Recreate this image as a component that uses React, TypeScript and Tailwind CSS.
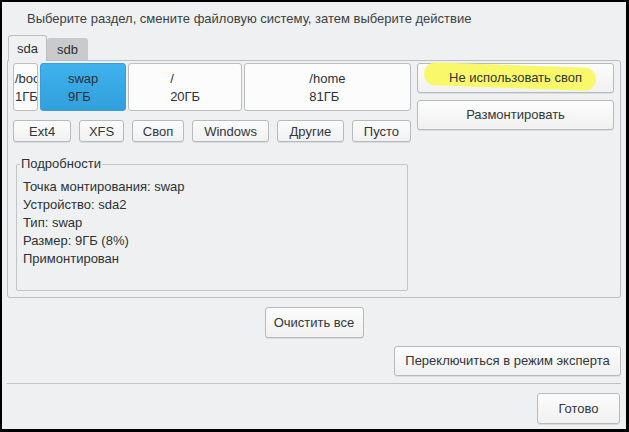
import React from 'react';

const font = { fontFamily: '"Liberation Sans", Arial, sans-serif' };

const btn =
  'flex items-center justify-center rounded-[3px] border border-[#b7b9ba] bg-gradient-to-b from-[#fcfcfc] to-[#f1f1f1] shadow-[0_1px_0_rgba(0,0,0,0.08)] text-[#31363b]';

type Part = { label: string; size: string; w: string; selected?: boolean };

const parts: Part[] = [
  { label: '/boot', size: '1ГБ', w: 'w-[25px]' },
  { label: 'swap', size: '9ГБ', w: 'w-[87px]', selected: true },
  { label: '/', size: '20ГБ', w: 'w-[114px]' },
  { label: '/home', size: '81ГБ', w: 'w-[168px]' },
];

const fsTypes = [
  { name: 'Ext4', w: 'w-[60px]' },
  { name: 'XFS', w: 'w-[46px]' },
  { name: 'Своп', w: 'w-[54px]' },
  { name: 'Windows', w: 'w-[79px]' },
  { name: 'Другие', w: 'w-[69px]' },
  { name: 'Пусто', w: 'w-[61px]' },
];

const details = [
  'Точка монтирования: swap',
  'Устройство: sda2',
  'Тип: swap',
  'Размер: 9ГБ (8%)',
  'Примонтирован',
];

const App: React.FC = () => {
  return (
    <div className="w-[629px] h-[432px] bg-black pt-[2px] pl-[2px] pr-[3px] pb-[3px]" style={font}>
      <div className="h-full bg-[#eff0f1] flex flex-col text-[13px] text-[#2c3135] leading-[18px]">
        {/* heading */}
        <div className="pl-[25px] pt-[8px] h-[33px] text-[#3b3f43]">
          Выберите раздел, смените файловую систему, затем выберите действие
        </div>

        {/* tabs */}
        <div className="flex items-end pl-[6px] h-[26px] relative z-10">
          <div className="w-[39px] h-[26px] border border-b-0 border-[#bcbebf] rounded-t-[3px] bg-[#eff0f1] flex items-center justify-center">
            sda
          </div>
          <div className="w-[41px] h-[23px] bg-[#c9cacb] rounded-t-[3px] flex items-center justify-center border-b border-[#bcbebf] pt-[1px]">
            sdb
          </div>
        </div>

        {/* tab panel */}
        <div className="mx-[5px] -mt-[1px] h-[238px] border border-[#bcbebf] rounded-b-[3px] rounded-tr-[3px] flex pl-[5px] pt-[2px] pr-[6px]">
          <div className="w-[398px] flex flex-col">
            <div className="flex gap-[2px] h-[48px]">
              {parts.map((p) => (
                <div
                  key={p.label}
                  className={`${p.w} h-full rounded-[3px] border overflow-hidden flex items-center justify-center pt-[2px] ${
                    p.selected
                      ? 'border-[#3a9fd8] bg-gradient-to-b from-[#3fb2ee] to-[#319fdc]'
                      : 'border-[#bcbebf] bg-[#fcfcfc]'
                  }`}
                >
                  <div className={`text-left whitespace-nowrap ${p.w === 'w-[25px]' ? 'w-full pl-[1px]' : ''}`}>
                    <div>{p.label}</div>
                    <div>{p.size}</div>
                  </div>
                </div>
              ))}
            </div>

            <div className="flex gap-[8px] mt-[9px] h-[22px]">
              {fsTypes.map((f) => (
                <div key={f.name} className={`${btn} ${f.w} h-full pt-[1px]`}>
                  {f.name}
                </div>
              ))}
            </div>

            {/* details groupbox */}
            <div className="ml-[3px] mr-[3px] mt-[22px] h-[127px] border border-[#c2c4c5] rounded-[2px] relative">
              <div className="absolute -top-[10px] left-[3px] bg-[#eff0f1] px-[1px]">Подробности</div>
              <div className="pt-[13px] pl-[6px]">
                {details.map((d) => (
                  <div key={d}>{d}</div>
                ))}
              </div>
            </div>
          </div>

          <div className="ml-[6px] flex-1 flex flex-col gap-[7px]">
            <div className={`${btn} h-[30px] relative`}>
              <span className="absolute left-[6px] top-[1px] w-[172px] h-[23px] bg-[#f8f86a] rounded-[12px] rotate-[2deg] blur-[0.5px]" />
              <span className="relative">Не использовать своп</span>
            </div>
            <div className={`${btn} h-[30px]`}>Размонтировать</div>
          </div>
        </div>

        {/* bottom controls */}
        <div className="flex justify-center mt-[9px]">
          <div className={`${btn} w-[99px] h-[31px]`}>Очистить все</div>
        </div>
        <div className="flex justify-end mt-[8px] pr-[5px]">
          <div className={`${btn} w-[227px] h-[30px]`}>Переключиться в режим эксперта</div>
        </div>
        <div className="mx-[5px] mt-[7px] h-[1px] bg-[#c2c4c5]" />
        <div className="flex justify-end mt-[9px] pr-[6px]">
          <div className={`${btn} w-[83px] h-[31px]`}>Готово</div>
        </div>
      </div>
    </div>
  );
};

export default App;
